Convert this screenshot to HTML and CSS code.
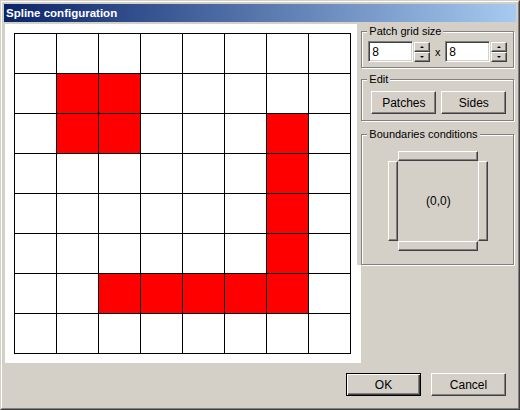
FILE: index.html
```html
<!DOCTYPE html>
<html lang="en">
<head>
  <meta charset="UTF-8">
  <title>Spline configuration</title>
  <link rel="stylesheet" href="styles.css">
</head>
<body>
<div class="window">
  <div class="frame">
    <div class="titlebar">Spline configuration</div>
    <div class="client">
      <div class="main">
        <div class="canvas">
          <div class="grid">
            <!-- row 1 -->
            <i></i><i></i><i></i><i></i><i></i><i></i><i></i><i></i>
            <!-- row 2 -->
            <i></i><i class="on"></i><i class="on"></i><i></i><i></i><i></i><i></i><i></i>
            <!-- row 3 -->
            <i></i><i class="on"></i><i class="on"></i><i></i><i></i><i></i><i class="on"></i><i></i>
            <!-- row 4 -->
            <i></i><i></i><i></i><i></i><i></i><i></i><i class="on"></i><i></i>
            <!-- row 5 -->
            <i></i><i></i><i></i><i></i><i></i><i></i><i class="on"></i><i></i>
            <!-- row 6 -->
            <i></i><i></i><i></i><i></i><i></i><i></i><i class="on"></i><i></i>
            <!-- row 7 -->
            <i></i><i></i><i class="on"></i><i class="on"></i><i class="on"></i><i class="on"></i><i class="on"></i><i></i>
            <!-- row 8 -->
            <i></i><i></i><i></i><i></i><i></i><i></i><i></i><i></i>
          </div>
        </div>
        <div class="side">
          <fieldset class="group">
            <legend>Patch grid size</legend>
            <div class="spin-row">
              <div class="edit">8</div>
              <div class="spin"><span class="up"></span><span class="down"></span></div>
              <span class="times">x</span>
              <div class="edit">8</div>
              <div class="spin"><span class="up"></span><span class="down"></span></div>
            </div>
          </fieldset>
          <fieldset class="group g-edit">
            <legend>Edit</legend>
            <div class="btn-row">
              <button class="btn small">Patches</button>
              <button class="btn small">Sides</button>
            </div>
          </fieldset>
          <fieldset class="group g-bound">
            <legend>Boundaries conditions</legend>
            <div class="bounds">
              <span></span><span class="bar"></span><span></span>
              <span class="bar"></span><span class="center">(0,0)</span><span class="bar"></span>
              <span></span><span class="bar"></span><span></span>
            </div>
          </fieldset>
        </div>
      </div>
      <div class="actions">
        <button class="btn default">OK</button>
        <button class="btn">Cancel</button>
      </div>
    </div>
  </div>
</div>
</body>
</html>
```

FILE: styles.css
```css
*{
  margin: 0;
  padding: 0;
  box-sizing: border-box;
}
body{
  font-family: "Liberation Sans", Arial, sans-serif;
  font-size: 11px;
  color: #000;
  background: #d4d0c8;
}
/* window chrome */
.window{
  width: 520px;
  height: 410px;
  border: 1px solid;
  border-color: #d4d0c8 #404040 #404040 #d4d0c8;
}
.frame{
  height: 100%;
  border: 1px solid;
  border-color: #fff #808080 #808080 #fff;
  padding: 2px;
  background: #d4d0c8;
}
.titlebar{
  height: 18px;
  line-height: 18px;
  padding-left: 2px;
  color: #fff;
  font-weight: bold;
  font-size: 11.5px;
  background: linear-gradient(to right, #0a246a, #a6caf0);
}
.client{
  padding-top: 2px;
}
.main{
  display: flex;
  margin-left: 1px;
}
/* drawing area */
.canvas{
  width: 357px;
  height: 339px;
  background: #fff;
  padding: 9px;
}
.grid{
  display: grid;
  grid-template-columns: repeat(8, 41px);
  grid-template-rows: repeat(8, 39px);
  gap: 1px;
  padding: 1px;
  width: 337px;
  background: #000;
}
.grid i{
  background: #fff;
}
.grid i.on{
  background: #f00;
}
/* right column */
.side{
  align-self: flex-start;
  width: 159px;
  margin-left: -4px;
  padding-left: 4px;
  padding-top: 1px;
  background: #d4d0c8;
}
.group{
  width: 153px;
  padding: 0;
  border: 1px solid #808080;
  box-shadow: inset 1px 1px #fff, 1px 1px #fff;
  min-width: 0;
}
.group legend{
  margin-left: 5px;
  padding: 0 2px;
  line-height: 13px;
  background: #d4d0c8;
}
.g-edit{
  margin-top: 5px;
}
.g-bound{
  margin-top: 7px;
}
/* spinners */
.spin-row{
  display: flex;
  align-items: flex-start;
  padding: 3px 0 5px 6px;
}
.edit{
  width: 45px;
  height: 21px;
  background: #fff;
  border: 1px solid;
  border-color: #808080 #fff #fff #808080;
  box-shadow: inset 1px 1px #404040, inset -1px -1px #d4d0c8;
  padding: 3px 0 0 3px;
  font-size: 12px;
}
.spin{
  display: flex;
  flex-direction: column;
  width: 16px;
  margin: 1px 0 0 1px;
}
.spin span{
  position: relative;
  height: 10px;
  border: 1px solid;
  border-color: #fff #404040 #404040 #fff;
  box-shadow: inset -1px -1px #808080;
}
.spin span::before{
  content: "";
  position: absolute;
  left: 5px;
  top: 3px;
  border-left: 2px solid transparent;
  border-right: 2px solid transparent;
}
.spin .up::before{
  border-bottom: 2px solid #000;
}
.spin .down::before{
  border-top: 2px solid #000;
}
.times{
  width: 15px;
  padding-top: 5px;
  text-align: center;
}
/* buttons */
.btn{
  font-family: "Liberation Sans", Arial, sans-serif;
  font-size: 12px;
  width: 75px;
  height: 23px;
  background: #d4d0c8;
  border: 1px solid;
  border-color: #fff #404040 #404040 #fff;
  box-shadow: inset -1px -1px #808080;
  color: #000;
}
.btn.default{
  border: 1px solid #000;
  box-shadow: inset 1px 1px #fff, inset -1px -1px #404040, inset -2px -2px #808080;
}
.btn.small{
  width: 65px;
}
.btn-row{
  display: flex;
  gap: 5px;
  padding: 5px 0 6px 9px;
}
/* boundaries widget */
.bounds{
  display: grid;
  grid-template-columns: 10px 80px 10px;
  grid-template-rows: 10px 80px 10px;
  width: 100px;
  margin: 10px 0 13px 26px;
}
.bounds .bar{
  border: 1px solid;
  border-color: #fff #404040 #404040 #fff;
  box-shadow: inset -1px -1px #808080;
}
.bounds .center{
  display: flex;
  align-items: center;
  justify-content: center;
  font-size: 12px;
}
/* dialog buttons */
.actions{
  display: flex;
  justify-content: flex-end;
  gap: 10px;
  margin-top: 10px;
  padding-right: 10px;
}
```
